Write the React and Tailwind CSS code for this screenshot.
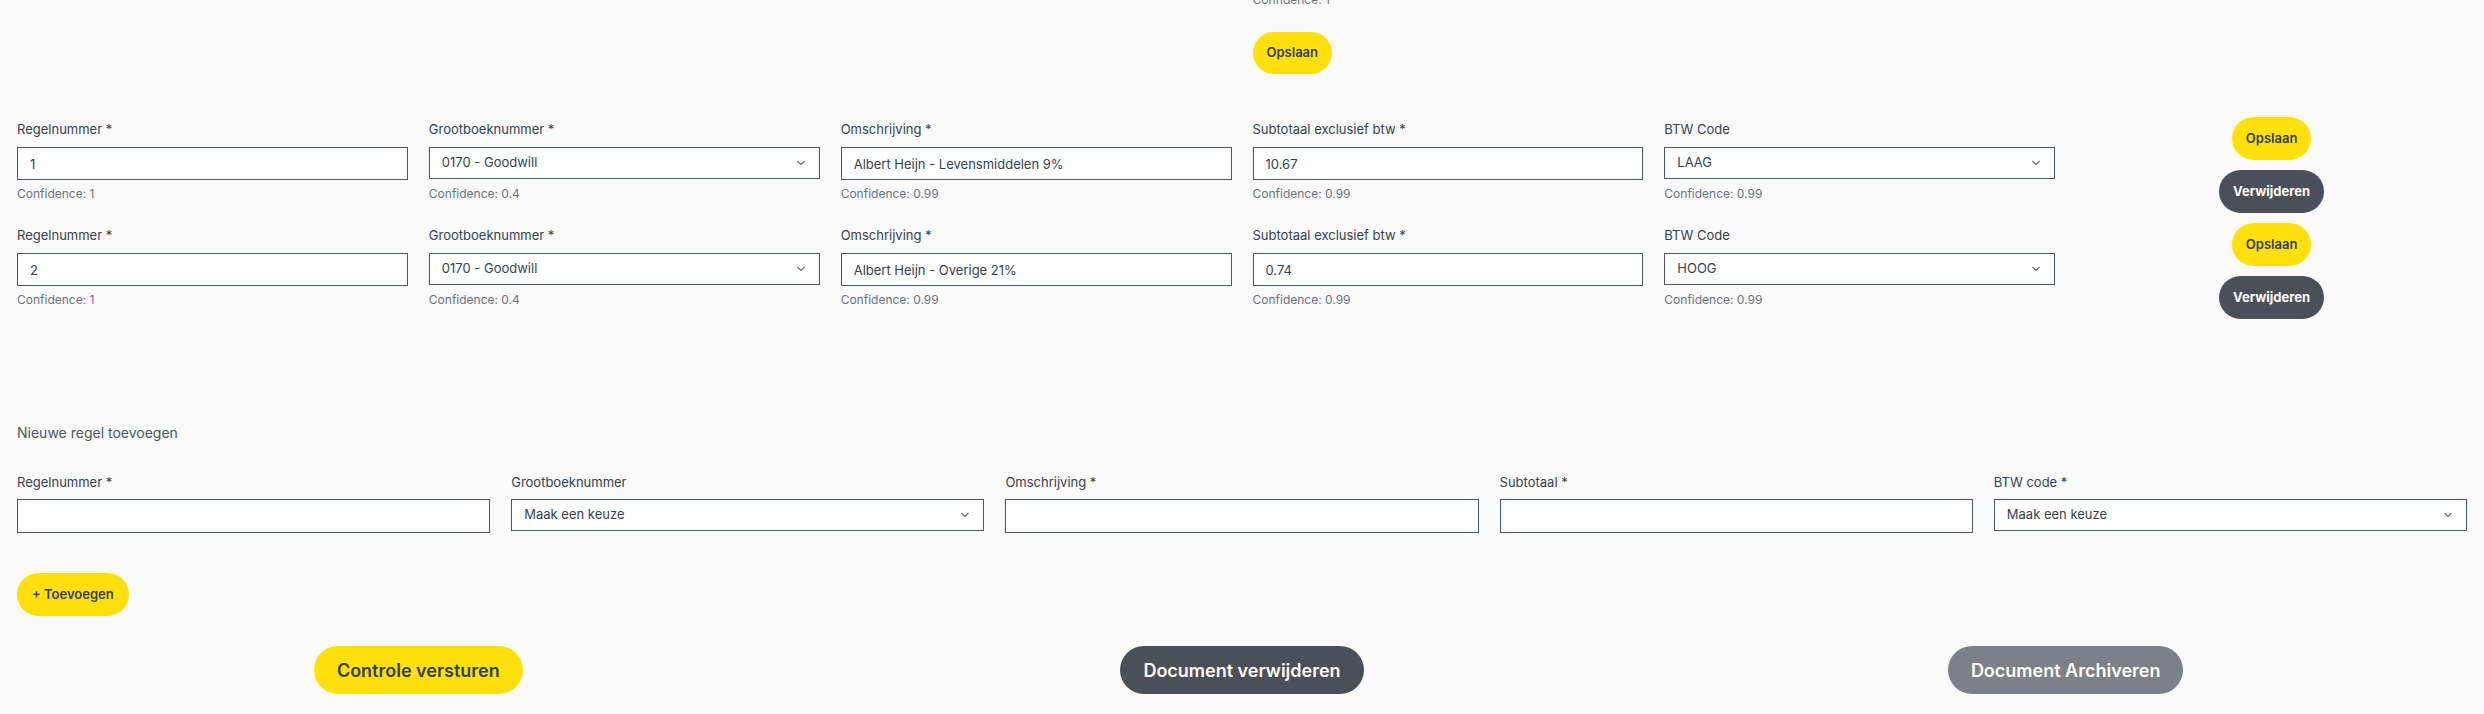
import React from 'react';

const font = { fontFamily: 'Inter, "Noto Sans", sans-serif' };

const Chevron = () => (
  <svg width="8" height="5" viewBox="0 0 8 5" fill="none" className="absolute right-[15px] top-1/2 -translate-y-1/2 pointer-events-none">
    <path d="M0.75 0.75L4 4L7.25 0.75" stroke="#6b7280" strokeWidth="1.2" strokeLinecap="round" strokeLinejoin="round" />
  </svg>
);

const TextField = ({ label, value, confidence, height = 'h-[33px]', gap = 'mt-[9px]' }) => (
  <div className="flex flex-col pt-[3px]">
    <label className="text-[13px] leading-[18px] text-gray-700">{label}</label>
    <input
      type="text"
      defaultValue={value}
      className={`${gap} ${height} w-full border border-gray-600 bg-white px-3 text-[13px] text-gray-700 outline-none`}
    />
    {confidence !== undefined && (
      <span className="mt-[6px] text-[12px] leading-4 text-gray-500">Confidence: {confidence}</span>
    )}
  </div>
);

const SelectField = ({ label, value, options, confidence, gap = 'mt-[9px]' }) => (
  <div className="flex flex-col pt-[3px]">
    <label className="text-[13px] leading-[18px] text-gray-700">{label}</label>
    <div className={`relative ${gap}`}>
      <select
        defaultValue={value}
        className="h-[32px] w-full appearance-none border border-gray-600 bg-white px-3 text-[13px] text-gray-700 outline-none"
      >
        {options.map((o) => (
          <option key={o} value={o}>{o}</option>
        ))}
      </select>
      <Chevron />
    </div>
    {confidence !== undefined && (
      <span className="mt-[7px] text-[12px] leading-4 text-gray-500">Confidence: {confidence}</span>
    )}
  </div>
);

const lines = [
  { nr: '1', gb: '0170 - Goodwill', omschrijving: 'Albert Heijn - Levensmiddelen 9%', subtotaal: '10.67', btw: 'LAAG' },
  { nr: '2', gb: '0170 - Goodwill', omschrijving: 'Albert Heijn - Overige 21%', subtotaal: '0.74', btw: 'HOOG' },
];

const LineRow = ({ line }) => (
  <div className="grid grid-cols-6 gap-x-[21px] items-start">
    <TextField label="Regelnummer *" value={line.nr} confidence="1" />
    <SelectField label="Grootboeknummer *" value={line.gb} options={['0170 - Goodwill']} confidence="0.4" />
    <TextField label="Omschrijving *" value={line.omschrijving} confidence="0.99" />
    <TextField label="Subtotaal exclusief btw *" value={line.subtotaal} confidence="0.99" />
    <SelectField label="BTW Code" value={line.btw} options={['LAAG', 'HOOG']} confidence="0.99" />
    <div className="flex flex-col items-center gap-[10px]">
      <button className="h-[43px] rounded-full bg-[#ffe00a] px-[14px] text-[13px] font-semibold text-gray-700">Opslaan</button>
      <button className="h-[43px] rounded-full bg-[#4b4f58] px-[14px] text-[13px] font-bold text-white">Verwijderen</button>
    </div>
  </div>
);

export default function App() {
  return (
    <div style={font} className="min-h-screen overflow-hidden bg-[#fafafa] px-[17px]">
      <div className="grid grid-cols-6 gap-x-[21px]">
        <div className="col-start-4 flex flex-col items-start">
          <span className="-mt-2 text-[12px] leading-4 text-gray-500">Confidence: 1</span>
          <button className="mt-6 h-[42px] rounded-full bg-[#ffe00a] px-[14px] text-[13px] font-semibold text-gray-700">Opslaan</button>
        </div>
      </div>

      <div className="mt-[43px] flex flex-col gap-[10px]">
        {lines.map((line) => (
          <LineRow key={line.nr} line={line} />
        ))}
      </div>

      <p className="mt-[105px] text-[14px] leading-[18px] text-gray-600">Nieuwe regel toevoegen</p>

      <div className="mt-[28px] grid grid-cols-5 gap-x-[21px]">
        <TextField label="Regelnummer *" height="h-[34px]" gap="mt-[8px]" />
        <SelectField label="Grootboeknummer" value="Maak een keuze" options={['Maak een keuze']} gap="mt-[8px]" />
        <TextField label="Omschrijving *" height="h-[34px]" gap="mt-[8px]" />
        <TextField label="Subtotaal *" height="h-[34px]" gap="mt-[8px]" />
        <SelectField label="BTW code *" value="Maak een keuze" options={['Maak een keuze', 'LAAG', 'HOOG']} gap="mt-[8px]" />
      </div>

      <button className="mt-[40px] h-[43px] rounded-full bg-[#ffe00a] px-[15px] text-[13px] font-semibold text-gray-700">+ Toevoegen</button>

      <div className="mt-[30px] grid grid-cols-3 gap-x-[21px] justify-items-center">
        <button className="h-[48px] rounded-full bg-[#ffe00a] px-[23px] text-[18px] font-semibold text-gray-700">Controle versturen</button>
        <button className="h-[48px] rounded-full bg-[#4b4f58] px-[23px] text-[18px] font-semibold text-white">Document verwijderen</button>
        <button className="h-[48px] rounded-full bg-[#7d8088] px-[23px] text-[18px] font-semibold text-white">Document Archiveren</button>
      </div>
    </div>
  );
}
